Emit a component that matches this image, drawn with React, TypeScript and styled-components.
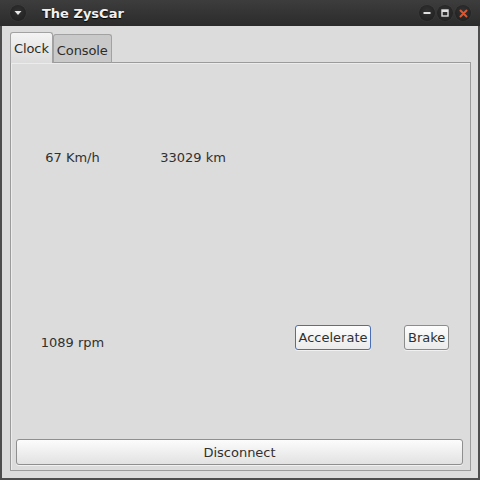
import * as React from 'react';
import styled, { createGlobalStyle } from 'styled-components';

const GlobalStyle = createGlobalStyle`
    html, body {
        margin: 0;
        padding: 0;
        background: #dcdcdc;
    }
    * {
        box-sizing: border-box;
    }
`;

const StyledWindow = styled.div`
    width: 480px;
    height: 480px;
    display: flex;
    flex-direction: column;
    font-family: "DejaVu Sans", "Liberation Sans", sans-serif;
    font-size: 13px;
    color: #303030;
    background: #dcdcdc;
`;

const StyledTitleBar = styled.div`
    height: 26px;
    flex: 0 0 26px;
    display: flex;
    align-items: center;
    padding: 0 9px 0 8px;
    background: linear-gradient(#3d3d3d, #2b2b2b);
    color: #f0f0f0;
`;

const StyledTitle = styled.div`
    font-weight: bold;
    font-size: 13px;
    margin-left: 16px;
    flex: 1;
    text-shadow: 0 1px 1px #000;
`;

const StyledTitleButton = styled.div`
    width: 16px;
    height: 16px;
    border-radius: 50%;
    background: radial-gradient(circle at 50% 40%, #333, #1c1c1c);
    box-shadow: 0 0 1px #555;
    display: flex;
    align-items: center;
    justify-content: center;
    margin-left: 2px;
`;

const StyledBody = styled.div`
    flex: 1;
    display: flex;
    flex-direction: column;
    padding: 6px 7px 7px 8px;
    border: 2px solid #4e4e4e;
    border-top: none;
`;

const StyledTabBar = styled.div`
    display: flex;
    align-items: flex-end;
    height: 31px;
    position: relative;
    z-index: 1;
    margin-bottom: -1px;
`;

const StyledTab = styled.div<{ $active?: boolean }>`
    height: ${p => (p.$active ? 31 : 29)}px;
    padding: 0 3px;
    display: flex;
    align-items: center;
    border: 1px solid #a2a2a2;
    border-bottom: ${p => (p.$active ? 'none' : '1px solid #9a9a9a')};
    border-radius: 3px 3px 0 0;
    background: ${p => (p.$active ? 'linear-gradient(#f4f4f4, #dcdcdc)' : '#c9c9c9')};
    margin-right: 0;
    padding-top: ${p => (p.$active ? 0 : 3)}px;
    color: #2c2c2c;
    letter-spacing: -0.1px;
`;

const StyledPanel = styled.div`
    flex: 1;
    display: flex;
    flex-direction: column;
    border: 1px solid #9b9b9b;
    box-shadow: inset 1px 1px 0 #ececec;
    padding: 6px 7px 5px 5px;
`;

const StyledGrid = styled.div`
    flex: 1;
    display: grid;
    grid-template-columns: 113px 128px 147px 1fr;
    grid-template-rows: 1fr 1fr;
    align-items: center;
    padding: 2px 0 4px 0;
`;

const StyledLabel = styled.div<{ $col: number; $row: number; $shift?: number }>`
    grid-column: ${p => p.$col};
    grid-row: ${p => p.$row};
    justify-self: center;
    margin-top: ${p => p.$shift || 0}px;
`;

const StyledButton = styled.button<{ $focused?: boolean }>`
    font-family: "DejaVu Sans", "Liberation Sans", sans-serif;
    font-size: 13px;
    color: #303030;
    height: 25px;
    padding: 0 3px;
    border-radius: 3px;
    border: 1px solid ${p => (p.$focused ? '#4a6fb8' : '#8c8c8c')};
    background: linear-gradient(#fdfdfd, #ebebeb);
    box-shadow: 0 1px 0 rgba(255, 255, 255, 0.6);
`;

const StyledGridButton = styled(StyledButton)<{ $col: number; $row: number; $offset: number }>`
    grid-column: ${p => p.$col};
    grid-row: ${p => p.$row};
    justify-self: ${p => (p.$offset ? 'center' : 'start')};
    margin-top: -14px;
    margin-left: ${p => p.$offset}px;
`;

const StyledWideButton = styled(StyledButton)`
    width: 100%;
    height: 26px;
    border-color: #8f8f8f;
    background: linear-gradient(#fcfcfc, #e2e2e2);
`;

export default function App() {
    return (
        <StyledWindow>
            <GlobalStyle />
            <StyledTitleBar>
                <StyledTitleButton>
                    <svg width="8" height="6" viewBox="0 0 8 6">
                        <path d="M0.5 1 L7.5 1 L4 5 Z" fill="#e8e8e8" />
                    </svg>
                </StyledTitleButton>
                <StyledTitle>The ZysCar</StyledTitle>
                <StyledTitleButton>
                    <svg width="8" height="8" viewBox="0 0 8 8">
                        <rect x="0.5" y="3" width="7" height="2" fill="#e0e0e0" />
                    </svg>
                </StyledTitleButton>
                <StyledTitleButton>
                    <svg width="8" height="8" viewBox="0 0 8 8">
                        <rect x="1" y="1" width="6" height="6" fill="none" stroke="#e0e0e0" strokeWidth="1.4" />
                        <rect x="1" y="1" width="6" height="2" fill="#e0e0e0" />
                    </svg>
                </StyledTitleButton>
                <StyledTitleButton>
                    <svg width="9" height="9" viewBox="0 0 9 9">
                        <path d="M1.5 1.5 L7.5 7.5 M7.5 1.5 L1.5 7.5" stroke="#e0552e" strokeWidth="2" strokeLinecap="round" />
                    </svg>
                </StyledTitleButton>
            </StyledTitleBar>
            <StyledBody>
                <StyledTabBar>
                    <StyledTab $active>Clock</StyledTab>
                    <StyledTab>Console</StyledTab>
                </StyledTabBar>
                <StyledPanel>
                    <StyledGrid>
                        <StyledLabel $col={1} $row={1} $shift={-10}>67 Km/h</StyledLabel>
                        <StyledLabel $col={2} $row={1} $shift={-10}>33029 km</StyledLabel>
                        <StyledLabel $col={1} $row={2} $shift={-4}>1089 rpm</StyledLabel>
                        <StyledGridButton $col={3} $row={2} $offset={5} $focused>
                            Accelerate
                        </StyledGridButton>
                        <StyledGridButton $col={4} $row={2} $offset={0}>
                            Brake
                        </StyledGridButton>
                    </StyledGrid>
                    <StyledWideButton>Disconnect</StyledWideButton>
                </StyledPanel>
            </StyledBody>
        </StyledWindow>
    );
}
